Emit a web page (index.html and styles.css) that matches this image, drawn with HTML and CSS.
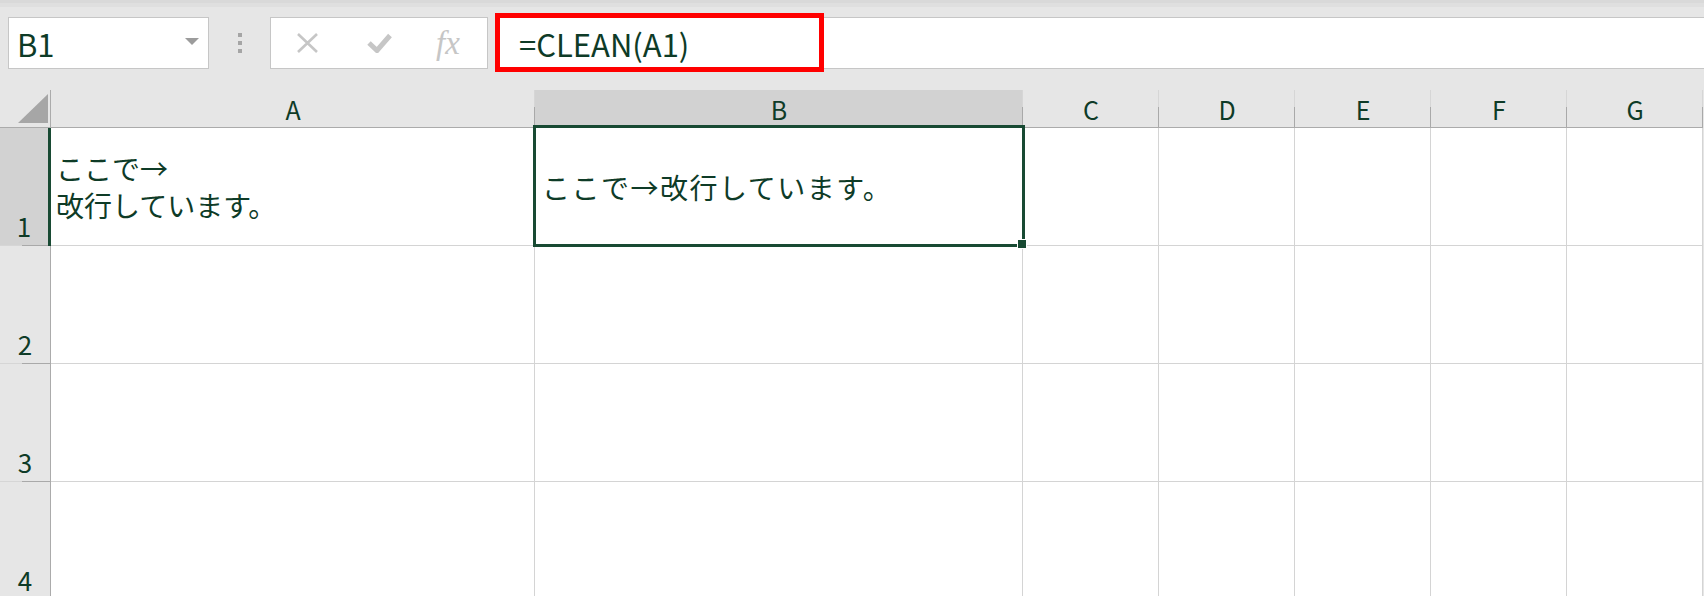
FILE: index.html
```html
<!DOCTYPE html>
<html lang="ja">
<head>
    <meta charset="UTF-8">
    <title>CLEAN</title>
    <link rel="stylesheet" href="styles.css">
</head>
<body>
    <div class="strip"></div>

    <!-- 名前ボックスと数式バー -->
    <div class="toolbar">
        <div class="namebox">
            <span>B1</span>
            <span class="caret"></span>
        </div>
        <div class="grip"><i></i><i></i><i></i></div>
        <div class="fbtns">
            <svg class="ico-cancel" width="23" height="20" viewBox="0 0 23 20">
                <path d="M2 1 L21 19 M21 1 L2 19" stroke="#c6c6c6" stroke-width="2.6" fill="none"/>
            </svg>
            <svg class="ico-enter" width="25" height="20" viewBox="0 0 25 20">
                <path d="M2 10 L10 17.5 L23 2.5" stroke="#c6c6c6" stroke-width="5" fill="none"/>
            </svg>
            <span class="fx">fx</span>
        </div>
        <div class="fbar">
            <span>=CLEAN(A1)</span>
            <div class="mark"></div>
        </div>
    </div>

    <!-- シート -->
    <div class="sheet">
        <div class="corner">
            <svg width="30" height="29" viewBox="0 0 30 29"><path d="M30 0 L30 29 L0 29 Z" fill="#a6a6a6"/></svg>
        </div>
        <div class="colhead">A</div>
        <div class="colhead on">B</div>
        <div class="colhead">C</div>
        <div class="colhead">D</div>
        <div class="colhead">E</div>
        <div class="colhead">F</div>
        <div class="colhead">G</div>

        <div class="rowhead on">1</div>
        <div class="cell wrap">
            <span class="line">ここで→</span>
            <span class="line">改行しています。</span>
        </div>
        <div class="cell active">
            <span class="spaced">ここで→改行しています。</span>
            <div class="sel"><i class="handle"></i></div>
        </div>
        <div class="cell"></div>
        <div class="cell"></div>
        <div class="cell"></div>
        <div class="cell"></div>
        <div class="cell"></div>

        <div class="rowhead">2</div>
        <div class="cell"></div>
        <div class="cell"></div>
        <div class="cell"></div>
        <div class="cell"></div>
        <div class="cell"></div>
        <div class="cell"></div>
        <div class="cell"></div>

        <div class="rowhead">3</div>
        <div class="cell"></div>
        <div class="cell"></div>
        <div class="cell"></div>
        <div class="cell"></div>
        <div class="cell"></div>
        <div class="cell"></div>
        <div class="cell"></div>

        <div class="rowhead">4</div>
        <div class="cell"></div>
        <div class="cell"></div>
        <div class="cell"></div>
        <div class="cell"></div>
        <div class="cell"></div>
        <div class="cell"></div>
        <div class="cell"></div>
    </div>
</body>
</html>
```

FILE: styles.css
```css
body {
    margin: 0;
    width: 1704px;
    height: 596px;
    overflow: hidden;
    background: #e6e6e6;
    font-family: "Noto Sans CJK JP", "Noto Sans", sans-serif;
    color: #0e3b27;
}

.strip {
    height: 3px;
    background: #d9d9d9;
    border-bottom: 4px solid #dfdfdf;
}

/* 上のバー */
.toolbar {
    display: flex;
    align-items: flex-start;
    height: 73px;
    padding: 10px 0 0 8px;
}
.namebox {
    box-sizing: border-box;
    width: 201px;
    height: 52px;
    background: #fff;
    border: 1px solid #c6c6c6;
    display: flex;
    align-items: center;
    justify-content: space-between;
    padding: 0 9px 0 8px;
    font-size: 31px;
    line-height: 1;
}
.caret {
    width: 0;
    height: 0;
    border-left: 7px solid transparent;
    border-right: 7px solid transparent;
    border-top: 7px solid #9c9c9c;
    margin-bottom: 4px;
}
.grip {
    display: flex;
    flex-direction: column;
    gap: 4px;
    margin: 16px 0 0 29px;
}
.grip i {
    display: block;
    width: 4px;
    height: 4px;
    background: #a5a5a5;
}
.fbtns {
    box-sizing: border-box;
    width: 218px;
    height: 52px;
    margin-left: 28px;
    background: #fff;
    border: 1px solid #c6c6c6;
    display: flex;
    align-items: center;
    padding-left: 25px;
}
.ico-enter { margin-left: 48px; }
.fx {
    margin-left: 44px;
    font-family: "Liberation Serif", serif;
    font-style: italic;
    font-size: 33px;
    color: #c6c6c6;
    line-height: 1;
}
.fbar {
    position: relative;
    flex: 1;
    box-sizing: border-box;
    height: 52px;
    margin-left: 7px;
    background: #fff;
    border-top: 1px solid #c6c6c6;
    border-bottom: 1px solid #c6c6c6;
    display: flex;
    align-items: center;
    padding-left: 24px;
    font-size: 31px;
    line-height: 1;
}
.mark {
    position: absolute;
    top: -5px;
    left: 0;
    width: 329px;
    height: 59px;
    box-sizing: border-box;
    border: 5px solid #ff0000;
}

/* グリッド */
.sheet {
    display: grid;
    grid-template-columns: 51px 484px 488px repeat(5, 136px);
    grid-template-rows: 38px repeat(4, 118px);
}
.corner, .colhead, .rowhead, .cell {
    box-sizing: border-box;
}
.corner {
    border-right: 1px solid #ababab;
    border-bottom: 1px solid #ababab;
    display: flex;
    justify-content: flex-end;
    align-items: flex-end;
    padding: 0 2px 4px 0;
}
.colhead {
    background: linear-gradient(#d6d6d6 45%, #a9a9a9 45%) right / 1px 100% no-repeat;
    background-color: #e6e6e6;
    border-bottom: 1px solid #ababab;
    display: flex;
    align-items: center;
    justify-content: center;
    font-size: 25px;
    line-height: 1;
    padding-top: 2px;
}
.colhead.on { background-color: #d2d2d2; }
.rowhead {
    background: linear-gradient(to right, #d6d6d6 45%, #a9a9a9 45%) bottom / 100% 1px no-repeat;
    background-color: #e6e6e6;
    border-right: 1px solid #ababab;
    display: flex;
    align-items: flex-end;
    justify-content: center;
    padding-bottom: 7px;
    font-size: 26px;
    line-height: 1;
}
.rowhead.on {
    background-color: #d2d2d2;
    border-right: 3px solid #184a33;
}
.cell {
    background: #fff;
    border-right: 1px solid #d4d4d4;
    border-bottom: 1px solid #d4d4d4;
    display: flex;
    align-items: center;
    padding-left: 5px;
    font-size: 28px;
}
/* 折り返しのあるセル */
.cell.wrap {
    flex-direction: column;
    align-items: flex-start;
    justify-content: center;
    gap: 8px;
}
.cell.wrap .line { line-height: 29px; }
.cell.active {
    position: relative;
    padding-left: 7px;
}
.spaced { letter-spacing: 1.5px; }

/* 選択枠 */
.sel {
    position: absolute;
    top: -3px;
    right: -3px;
    bottom: -2px;
    left: -2px;
    border: 3px solid #184a33;
}
.handle {
    position: absolute;
    right: -5px;
    bottom: -5px;
    width: 8px;
    height: 8px;
    background: #184a33;
    border: 1px solid #fff;
}
```
